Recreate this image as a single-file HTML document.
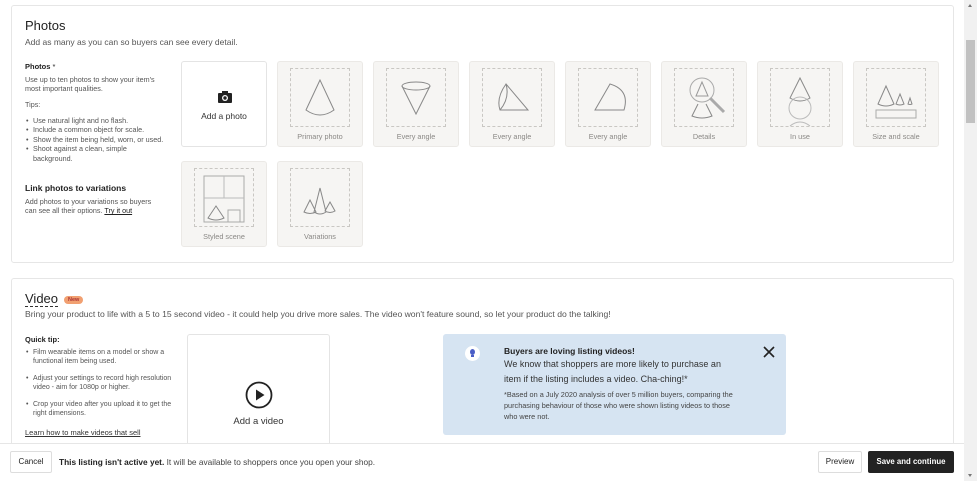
<!DOCTYPE html>
<html><head><meta charset="utf-8"><style>
*{box-sizing:border-box;margin:0;padding:0}
body{width:977px;height:481px;overflow:hidden;background:#fff;font-family:"Liberation Sans",sans-serif;color:#222;position:relative}
.card{position:absolute;left:11px;width:943px;border:1px solid #e6e6e6;border-radius:3px;background:#fff}
.abs{position:absolute}
.tile{position:absolute;width:86px;height:86px;background:#f6f5f3;border:1px solid #ebe9e6;border-radius:3px}
.tile .dash{position:absolute;left:12px;top:6px;width:60px;height:59px;border:1px dashed #c9c7c3}
.tile .lbl{position:absolute;left:0;right:0;top:70px;text-align:center;font-size:7.3px;color:#8a8885}
.tile svg{position:absolute;left:12px;top:6px}
.small{font-size:7.2px;color:#555;line-height:9.4px}
ul{list-style:none}
li{position:relative;padding-left:9px}
li:before{content:"•";position:absolute;left:2px}
</style></head><body>
<div class="card" style="top:5px;height:258px"></div>
<div class="abs" style="left:25px;top:18px;font-size:13px;color:#222">Photos</div>
<div class="abs" style="left:25px;top:37px;font-size:8.5px;color:#555">Add as many as you can so buyers can see every detail.</div>
<div class="abs" style="left:25px;top:62px;font-size:7.5px;font-weight:bold">Photos <span style="font-weight:normal">*</span></div>
<div class="abs small" style="left:25px;top:75px;width:150px">Use up to ten photos to show your item's<br>most important qualities.</div>
<div class="abs small" style="left:25px;top:100px">Tips:</div>
<ul class="abs small" style="left:24px;top:116px;width:142px">
<li>Use natural light and no flash.</li><li>Include a common object for scale.</li><li>Show the item being held, worn, or used.</li><li>Shoot against a clean, simple background.</li></ul>
<div class="abs" style="left:25px;top:183px;font-size:8.5px;font-weight:bold">Link photos to variations</div>
<div class="abs small" style="left:25px;top:197px;width:150px">Add photos to your variations so buyers<br>can see all their options. <u style="color:#222">Try it out</u></div>

<div class="tile" style="left:181px;top:61px;background:#fff;border-color:#e4e4e4">
<svg width="16" height="14" viewBox="0 0 16 14" style="left:35px;top:28px"><rect x="1" y="3" width="14" height="10" rx="1" fill="#222"/><rect x="5" y="1" width="6" height="3" fill="#222"/><circle cx="8" cy="8" r="3" fill="#fff"/><circle cx="8" cy="8" r="1.7" fill="#222"/></svg>
<div style="position:absolute;left:0;right:0;top:49px;text-align:center;font-size:8.5px;color:#333">Add a photo</div></div>

<div class="tile" style="left:277px;top:61px"><div class="dash"></div><svg width="60" height="60"><path d="M30 12 L16 42 Q30 52 44 42 Z" fill="none" stroke="#888" stroke-width="1"/></svg><div class="lbl">Primary photo</div></div>
<div class="tile" style="left:373px;top:61px"><div class="dash"></div><svg width="60" height="60"><ellipse cx="30" cy="18" rx="14" ry="4" fill="none" stroke="#888"/><path d="M16 18 L30 46 L44 18" fill="none" stroke="#888"/></svg><div class="lbl">Every angle</div></div>
<div class="tile" style="left:469px;top:61px"><div class="dash"></div><svg width="60" height="60"><path d="M24 16 Q14 30 18 42 L46 42 Z M24 16 Q28 30 18 42" fill="none" stroke="#888"/></svg><div class="lbl">Every angle</div></div>
<div class="tile" style="left:565px;top:61px"><div class="dash"></div><svg width="60" height="60"><path d="M32 16 L17 42 L46 42 Q52 22 32 16 Z" fill="none" stroke="#888"/></svg><div class="lbl">Every angle</div></div>
<div class="tile" style="left:661px;top:61px"><div class="dash"></div><svg width="60" height="60"><circle cx="28" cy="22" r="12" fill="none" stroke="#aaa"/><path d="M28 14 L22 28 L34 28 Z" fill="none" stroke="#999"/><path d="M36 30 L50 44" stroke="#aaa" stroke-width="3"/><path d="M24 36 L18 48 Q28 52 38 48 L32 36" fill="none" stroke="#888"/></svg><div class="lbl">Details</div></div>
<div class="tile" style="left:757px;top:61px"><div class="dash"></div><svg width="60" height="60"><path d="M30 10 L20 30 Q30 36 40 30 Z" fill="none" stroke="#888"/><circle cx="30" cy="40" r="11" fill="none" stroke="#bbb"/><path d="M20 58 Q30 50 40 58" fill="none" stroke="#bbb"/></svg><div class="lbl">In use</div></div>
<div class="tile" style="left:853px;top:61px"><div class="dash"></div><svg width="60" height="60"><path d="M20 18 L12 36 Q20 40 28 36 Z M34 26 L30 36 Q34 38 38 36 Z M44 30 L42 36 Q44 37 46 36 Z" fill="none" stroke="#888"/><rect x="10" y="42" width="40" height="8" fill="none" stroke="#aaa"/></svg><div class="lbl">Size and scale</div></div>
<div class="tile" style="left:181px;top:161px"><div class="dash"></div><svg width="60" height="60"><rect x="10" y="8" width="40" height="46" fill="none" stroke="#aaa"/><path d="M10 30 L50 30 M30 8 L30 30" stroke="#bbb"/><path d="M22 38 L14 50 Q22 54 30 50 Z" fill="none" stroke="#888"/><rect x="34" y="42" width="12" height="12" fill="none" stroke="#aaa"/></svg><div class="lbl">Styled scene</div></div>
<div class="tile" style="left:277px;top:161px"><div class="dash"></div><svg width="60" height="60"><path d="M20 32 L14 44 Q20 47 26 44 Z M30 20 L24 44 Q30 48 36 44 Z M40 34 L35 43 Q40 46 45 43 Z" fill="none" stroke="#888"/></svg><div class="lbl">Variations</div></div>

<div class="card" style="top:278px;height:200px"></div>
<div class="abs" style="left:25px;top:292px;font-size:13px;border-bottom:1px dashed #333;line-height:14px">Video</div>
<div class="abs" style="left:64px;top:296px;background:#f1a071;color:#a33;font-size:5.5px;font-weight:bold;padding:1px 4px;border-radius:6px">New</div>
<div class="abs" style="left:25px;top:309px;font-size:8.6px;color:#555;white-space:nowrap">Bring your product to life with a 5 to 15 second video - it could help you drive more sales. The video won't feature sound, so let your product do the talking!</div>
<div class="abs" style="left:25px;top:335px;font-size:7.5px;font-weight:bold">Quick tip:</div>
<ul class="abs small" style="left:24px;top:348px;width:150px;font-size:7px">
<li>Film wearable items on a model or show a functional item being used.</li>
<li style="margin-top:7px">Adjust your settings to record high resolution video - aim for 1080p or higher.</li>
<li style="margin-top:7px">Crop your video after you upload it to get the right dimensions.</li></ul>
<div class="abs" style="left:25px;top:428px;font-size:7.5px;text-decoration:underline;color:#333">Learn how to make videos that sell</div>
<div class="abs" style="left:187px;top:334px;width:143px;height:120px;border:1px solid #e4e4e4;border-radius:3px">
<svg width="28" height="28" viewBox="0 0 28 28" style="position:absolute;left:57px;top:46px"><circle cx="14" cy="14" r="12.5" fill="none" stroke="#222" stroke-width="1.8"/><path d="M11 8.5 L19.5 14 L11 19.5 Z" fill="#222"/></svg>
<div style="position:absolute;left:0;right:0;top:81px;text-align:center;font-size:9.5px;color:#333">Add a video</div></div>
<div class="abs" style="left:443px;top:334px;width:343px;height:101px;background:#d6e4f2;border-radius:3px">
<div style="position:absolute;left:22px;top:12px;width:15px;height:15px;border-radius:50%;background:#fff"><div style="position:absolute;left:5px;top:3px;width:5px;height:6px;border-radius:50%;background:#4a5ec7"></div><div style="position:absolute;left:6px;top:9px;width:3px;height:2px;background:#4a5ec7"></div></div>
<div style="position:absolute;left:61px;top:12px;font-size:8.5px;font-weight:bold;color:#222">Buyers are loving listing videos!</div>
<div style="position:absolute;left:61px;top:23px;font-size:9px;line-height:14.5px;color:#333;width:232px">We know that shoppers are more likely to purchase an item if the listing includes a video. Cha-ching!*</div>
<div style="position:absolute;left:61px;top:55px;font-size:7.3px;line-height:11px;color:#444;width:232px">*Based on a July 2020 analysis of over 5 million buyers, comparing the purchasing behaviour of those who were shown listing videos to those who were not.</div>
<svg width="12" height="12" style="position:absolute;left:320px;top:12px"><path d="M1 1 L11 11 M11 1 L1 11" stroke="#222" stroke-width="1.6"/></svg></div>

<div class="abs" style="left:0;top:443px;width:964px;height:38px;background:#fff;border-top:1px solid #e6e6e6"></div>
<div class="abs" style="left:10px;top:451px;width:42px;height:22px;border:1px solid #ddd;border-radius:2px;font-size:8px;line-height:20px;text-align:center">Cancel</div>
<div class="abs" style="left:59px;top:457px;font-size:8.3px;color:#444;white-space:nowrap"><b style="color:#222">This listing isn't active yet.</b> It will be available to shoppers once you open your shop.</div>
<div class="abs" style="left:818px;top:451px;width:44px;height:22px;border:1px solid #ddd;border-radius:2px;font-size:8px;line-height:20px;text-align:center">Preview</div>
<div class="abs" style="left:868px;top:451px;width:86px;height:22px;background:#222;border-radius:2px;color:#fff;font-size:7.8px;font-weight:bold;line-height:22px;text-align:center">Save and continue</div>

<div class="abs" style="left:964px;top:0;width:13px;height:481px;background:#f1f1f1"></div>
<div class="abs" style="left:966px;top:40px;width:9px;height:83px;background:#c1c1c1"></div>
<div class="abs" style="left:968px;top:4px;width:0;height:0;border-left:2.5px solid transparent;border-right:2.5px solid transparent;border-bottom:3px solid #777"></div>
<div class="abs" style="left:968px;top:474px;width:0;height:0;border-left:2.5px solid transparent;border-right:2.5px solid transparent;border-top:3px solid #777"></div>
</body></html>
